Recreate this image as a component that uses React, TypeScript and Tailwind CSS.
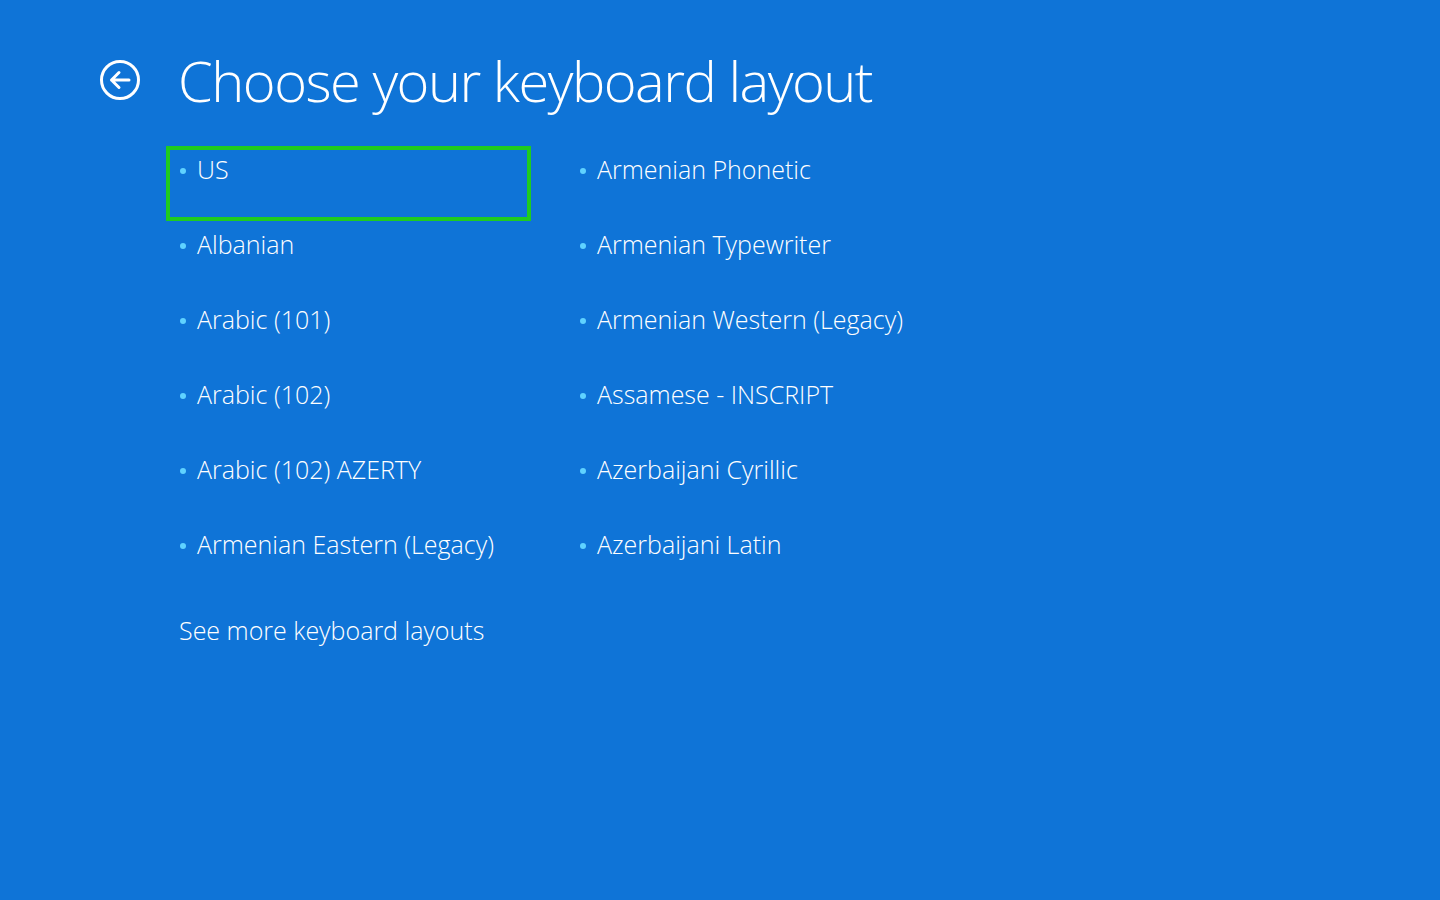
import React from 'react';

const leftColumn = ['US', 'Albanian', 'Arabic (101)', 'Arabic (102)', 'Arabic (102) AZERTY', 'Armenian Eastern (Legacy)'];
const rightColumn = [
  'Armenian Phonetic',
  'Armenian Typewriter',
  'Armenian Western (Legacy)',
  'Assamese - INSCRIPT',
  'Azerbaijani Cyrillic',
  'Azerbaijani Latin',
];

const font = { fontFamily: '"Open Sans", "Noto Sans", sans-serif' };

const LayoutItem = ({ name, selected }: { name: string; selected?: boolean }) => (
  <div
    className={`w-[365px] h-[75px] border-4 ${selected ? 'border-[#1fcb1f]' : 'border-transparent'} flex items-start pt-[2px] pl-[10px]`}
  >
    <span className="w-[6px] h-[6px] rounded-full bg-[#5fd2ff] mt-[16px] mr-[11px] shrink-0" />
    <span className="text-[25px] leading-[34px] font-light text-white whitespace-nowrap">{name}</span>
  </div>
);

export default function App() {
  return (
    <div className="w-[1440px] h-[900px] bg-[#0f74d7] overflow-hidden" style={font}>
      <div className="flex items-center pt-[41px] pl-[99px]">
        <svg width="42" height="42" viewBox="0 0 42 42" className="shrink-0">
          <circle cx="21" cy="21" r="18.5" fill="none" stroke="white" strokeWidth="3" />
          <path d="M30 21H12.5M20 13.5L12.5 21L20 28.5" fill="none" stroke="white" strokeWidth="3" strokeLinecap="round" strokeLinejoin="round" />
        </svg>
        <h1 className="ml-[37px] text-[56px] leading-[78px] font-light text-white whitespace-nowrap tracking-[-1.5px]">
          Choose your keyboard layout
        </h1>
      </div>

      <div className="flex gap-[35px] pl-[166px] mt-[27px]">
        <div className="flex flex-col">
          {leftColumn.map((name, i) => (
            <LayoutItem key={name} name={name} selected={i === 0} />
          ))}
        </div>
        <div className="flex flex-col">
          {rightColumn.map((name) => (
            <LayoutItem key={name} name={name} />
          ))}
        </div>
      </div>

      <div className="pl-[179px] mt-[17px] text-[25px] leading-[34px] font-light text-white">See more keyboard layouts</div>
    </div>
  );
}
